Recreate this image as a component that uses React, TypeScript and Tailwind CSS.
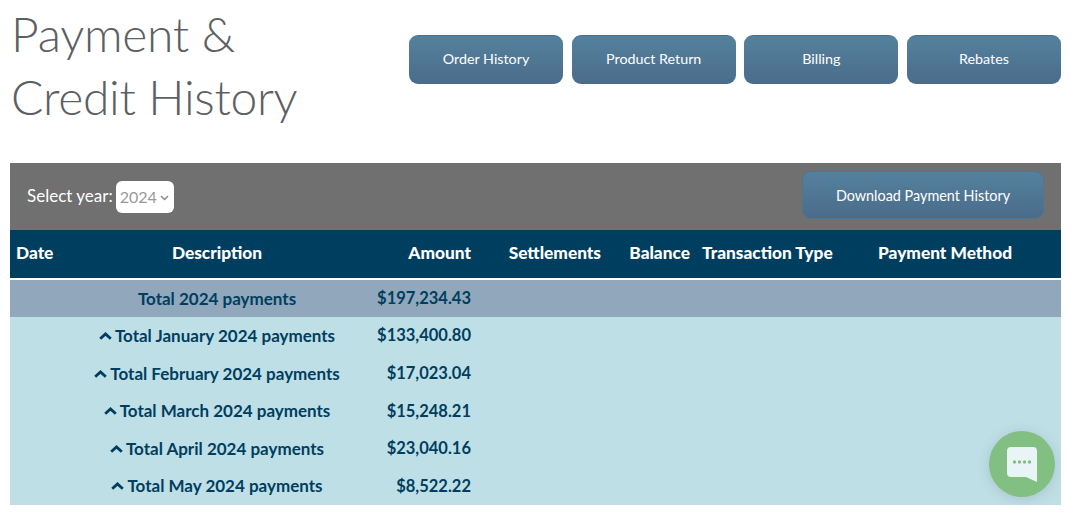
const navButtons = [
  { label: 'Order History', width: 'w-[154px]' },
  { label: 'Product Return', width: 'w-[164px]' },
  { label: 'Billing', width: 'w-[154px]' },
  { label: 'Rebates', width: 'w-[154px]' },
];

const months = [
  { label: 'Total January 2024 payments', amount: '$133,400.80' },
  { label: 'Total February 2024 payments', amount: '$17,023.04' },
  { label: 'Total March 2024 payments', amount: '$15,248.21' },
  { label: 'Total April 2024 payments', amount: '$23,040.16' },
  { label: 'Total May 2024 payments', amount: '$8,522.22' },
];

function ChevronUp() {
  return (
    <svg width="13" height="8" viewBox="0 0 13 8" className="inline-block mr-[3px] align-[2px]" fill="none">
      <path d="M1.2 6.800 6.500 1.900l5.300 4.900" stroke="#003e60" strokeWidth="2.800" />
    </svg>
  );
}

function ChatWidget() {
  return (
    <div className="absolute left-[989px] top-[431px] w-[66px] h-[66px] rounded-full bg-[#82bf82] shadow-[0_2px_14px_rgba(0,0,0,0.12)] flex items-center justify-center">
      <svg width="32" height="37" viewBox="0 0 32 37">
        <path d="M5 1h22a4 4 0 0 1 4 4v31l-11-5H5a4 4 0 0 1-4-4V5a4 4 0 0 1 4-4Z" fill="#e9f4f6" />
        <circle cx="8.5" cy="16" r="1.7" fill="#82bf82" />
        <circle cx="13.5" cy="16" r="1.7" fill="#82bf82" />
        <circle cx="18.5" cy="16" r="1.7" fill="#82bf82" />
        <circle cx="23.5" cy="16" r="1.7" fill="#82bf82" />
      </svg>
    </div>
  );
}

export default function App() {
  return (
    <div className="relative h-[515px] overflow-hidden bg-white px-[10px] font-['Lato',sans-serif]">
      <header className="flex h-[163px] justify-between">
        <h1 className="pl-[1px] pt-[2px] w-[390px] text-[48px] leading-[63px] font-light tracking-[-0.3px] text-[#5c5f64]">
          Payment &<br />
          Credit History
        </h1>
        <nav className="flex gap-[8.67px] pt-[35px]">
          {navButtons.map((b) => (
            <button
              key={b.label}
              className={`${b.width} h-[49px] rounded-[9px] border-t border-[#48708c] bg-gradient-to-b from-[#55819d] to-[#4a6c8b] pb-[2px] text-white text-[14.3px]`}
            >
              {b.label}
            </button>
          ))}
        </nav>
      </header>

      <div className="flex h-[67px] items-center justify-between bg-[#707070] pl-[17px] pr-[17px]">
        <div className="flex items-center gap-[3px] text-white text-[17px]">
          <span className="-mt-[2px]">Select year:</span>
          <div className="relative">
            <select className="block w-[58px] h-[32px] appearance-none rounded-[6px] bg-white pl-[4px] text-[16px] text-[#999999]">
              <option>2024</option>
            </select>
            <svg width="9" height="6" viewBox="0 0 9 6" className="absolute right-[5px] top-[14px]" fill="none">
              <path d="M1 1l3.500 3.500L8 1" stroke="#8a8a8a" strokeWidth="1.500" />
            </svg>
          </div>
        </div>
        <button className="w-[242px] h-[48px] -mt-[3px] rounded-[9px] border border-[#4d7693] bg-gradient-to-b from-[#55819d] to-[#4a6c8b] pt-[1px] text-white text-[14.4px]">
          Download Payment History
        </button>
      </div>

      <table className="w-full table-fixed border-collapse text-[#003e60] text-[17px] font-bold">
        <colgroup>
          <col className="w-[60px]" />
          <col className="w-[294px]" />
          <col className="w-[113px]" />
          <col className="w-[130px]" />
          <col className="w-[89px]" />
          <col className="w-[176px]" />
          <col />
        </colgroup>
        <thead>
          <tr className="h-[49px] bg-[#003e60] text-white text-[17.3px] border-b-2 border-white">
            <th className="px-[6px] pb-[2px] text-left font-black">Date</th>
            <th className="px-[6px] pb-[2px] text-center font-black">Description</th>
            <th className="px-[6px] pb-[2px] text-right font-black">Amount</th>
            <th className="px-[6px] pb-[2px] text-right font-black">Settlements</th>
            <th className="px-[6px] pb-[2px] text-right font-black">Balance</th>
            <th className="px-[6px] pb-[2px] text-left font-black">Transaction Type</th>
            <th className="px-[6px] pb-[2px] text-left font-black">Payment Method</th>
          </tr>
        </thead>
        <tbody>
          <tr className="h-[38px] bg-[#91a7bb]">
            <td />
            <td className="px-[6px] text-center">Total 2024 payments</td>
            <td className="px-[6px] text-right text-[16.5px]">$197,234.43</td>
            <td colSpan={4} />
          </tr>
          {months.map((m) => (
            <tr key={m.label} className="h-[37.6px] bg-[#bfdfe6]">
              <td />
              <td className="px-[6px] text-center">
                <ChevronUp />
                {m.label}
              </td>
              <td className="px-[6px] text-right text-[16.5px]">{m.amount}</td>
              <td colSpan={4} />
            </tr>
          ))}
        </tbody>
      </table>

      <ChatWidget />
    </div>
  );
}
